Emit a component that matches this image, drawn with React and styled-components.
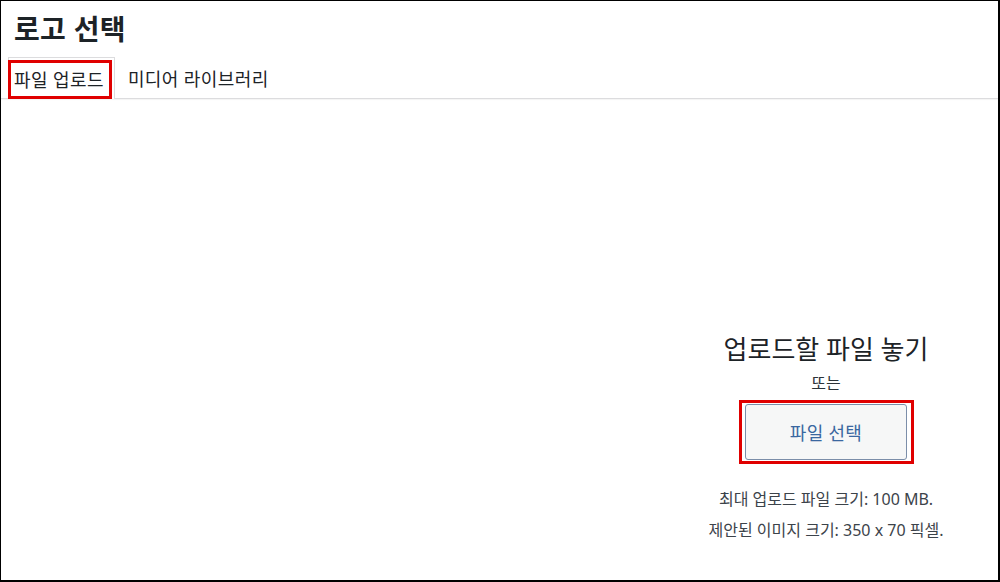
import React from 'react';
import styled, { createGlobalStyle } from 'styled-components';

const GlobalStyle = createGlobalStyle`
  html, body {
    margin: 0;
    padding: 0;
    background: #fff;
  }
  * {
    box-sizing: border-box;
  }
`;

const Frame = styled.div`
  width: 1000px;
  height: 582px;
  display: flex;
  flex-direction: column;
  border-style: solid;
  border-color: #000;
  border-width: 1px 2px 2px 1px;
  font-family: "Noto Sans", "Noto Sans CJK KR", sans-serif;
  color: #1d2327;
  background: #fff;
  overflow: hidden;
`;

const Title = styled.h1`
  margin: 0;
  padding: 9px 0 0 13px;
  height: 56px;
  font-size: 28px;
  font-weight: 700;
  letter-spacing: 0.3px;
  line-height: 38px;
  color: #1d2327;
`;

const TabBar = styled.div`
  display: flex;
  height: 42px;
  padding-left: 7px;
  border-bottom: 1px solid #dcdcde;
  box-shadow: 0 1px 1px rgba(0, 0, 0, 0.04);
`;

const Tab = styled.div`
  position: relative;
  display: flex;
  align-items: center;
  padding: ${(p) => (p.$active ? '0 10px 0 5px' : '0 12px')};
  margin-bottom: ${(p) => (p.$active ? '-1px' : '0')};
  font-size: 18px;
  letter-spacing: 0.4px;
  color: #1d2327;
  background: ${(p) => (p.$active ? '#fff' : 'transparent')};
  border: 1px solid ${(p) => (p.$active ? '#dcdcde' : 'transparent')};
  border-bottom: 0;
`;

const Marker = styled.span`
  position: absolute;
  pointer-events: none;
  border: 3px solid #e00000;
  top: ${(p) => p.$top}px;
  left: ${(p) => p.$left}px;
  right: ${(p) => p.$right}px;
  bottom: ${(p) => p.$bottom}px;
`;

const Body = styled.div`
  flex: 1;
  display: flex;
  justify-content: flex-end;
`;

const DropZone = styled.div`
  width: 344px;
  padding-top: 232px;
  display: flex;
  flex-direction: column;
  align-items: center;
  text-align: center;
`;

const DropTitle = styled.h2`
  margin: 0;
  font-size: 26px;
  font-weight: 400;
  line-height: 36px;
  color: #1d2327;
`;

const Or = styled.p`
  margin: 6px 0 0;
  font-size: 16px;
  line-height: 20px;
  color: #2c3338;
`;

const ButtonWrap = styled.div`
  position: relative;
  margin-top: 11px;
`;

const SelectButton = styled.button`
  display: block;
  width: 162px;
  height: 56px;
  font-family: inherit;
  font-size: 18px;
  letter-spacing: 0.3px;
  color: #3a67a0;
  background: #f6f7f7;
  border: 1px solid #7b8ea9;
  border-radius: 3px;
  cursor: pointer;
`;

const Note = styled.p`
  margin: ${(p) => p.$gap}px 0 0;
  font-size: 16px;
  line-height: 20px;
  color: #3c434a;
`;

export default function App() {
  return (
    <>
      <GlobalStyle />
      <Frame>
        <Title>로고 선택</Title>
        <TabBar>
          <Tab $active>
            파일 업로드
            <Marker $top={2} $left={-1} $right={2} $bottom={0} />
          </Tab>
          <Tab>미디어 라이브러리</Tab>
        </TabBar>
        <Body>
          <DropZone>
            <DropTitle>업로드할 파일 놓기</DropTitle>
            <Or>또는</Or>
            <ButtonWrap>
              <SelectButton type="button">파일 선택</SelectButton>
              <Marker $top={-4} $left={-6} $right={-7} $bottom={-4} />
            </ButtonWrap>
            <Note $gap={29}>최대 업로드 파일 크기: 100 MB.</Note>
            <Note $gap={11}>제안된 이미지 크기: 350 x 70 픽셀.</Note>
          </DropZone>
        </Body>
      </Frame>
    </>
  );
}
